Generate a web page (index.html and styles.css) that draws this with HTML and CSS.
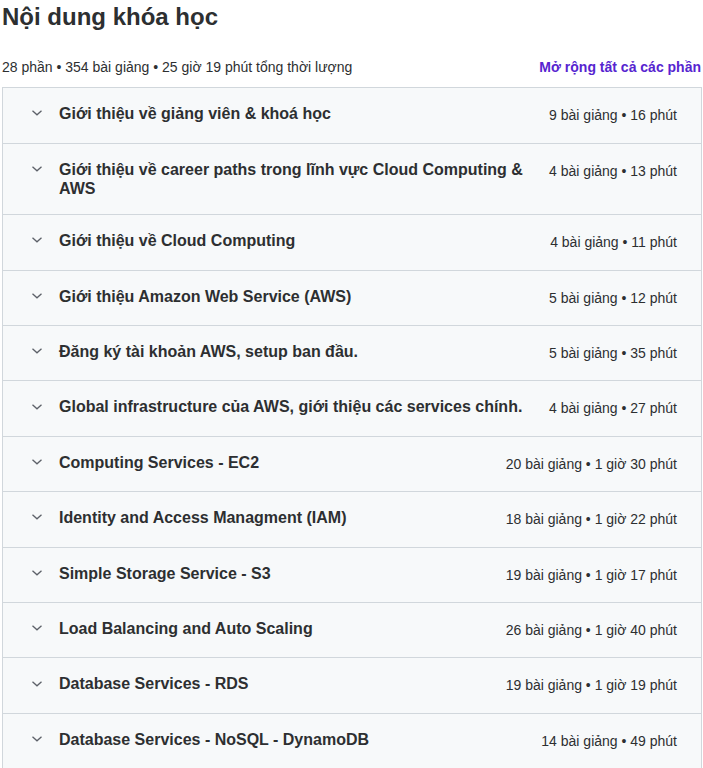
FILE: index.html
```html
<!DOCTYPE html>
<html lang="vi">
<head>
<meta charset="utf-8">
<title>Nội dung khóa học</title>
<link rel="stylesheet" href="styles.css">
</head>
<body>
<div class="page">
  <h2 class="heading">Nội dung khóa học</h2>
  <div class="summary">
    <span class="summary-text">28 phần • 354 bài giảng • 25 giờ 19 phút tổng thời lượng</span>
    <button class="expand-all">Mở rộng tất cả các phần</button>
  </div>
  <div class="curriculum">
    <div class="section"><span class="chev"><svg width="10" height="6" viewBox="0 0 10 6"><polyline points="0.5,0.8 5,4.8 9.5,0.8" fill="none" stroke="#5d6169" stroke-width="1.3"/></svg></span><span class="title">Giới thiệu về giảng viên &amp; khoá học</span><span class="meta">9 bài giảng • 16 phút</span></div>
    <div class="section"><span class="chev"><svg width="10" height="6" viewBox="0 0 10 6"><polyline points="0.5,0.8 5,4.8 9.5,0.8" fill="none" stroke="#5d6169" stroke-width="1.3"/></svg></span><span class="title">Giới thiệu về career paths trong lĩnh vực Cloud Computing &amp; AWS</span><span class="meta">4 bài giảng • 13 phút</span></div>
    <div class="section"><span class="chev"><svg width="10" height="6" viewBox="0 0 10 6"><polyline points="0.5,0.8 5,4.8 9.5,0.8" fill="none" stroke="#5d6169" stroke-width="1.3"/></svg></span><span class="title">Giới thiệu về Cloud Computing</span><span class="meta">4 bài giảng • 11 phút</span></div>
    <div class="section"><span class="chev"><svg width="10" height="6" viewBox="0 0 10 6"><polyline points="0.5,0.8 5,4.8 9.5,0.8" fill="none" stroke="#5d6169" stroke-width="1.3"/></svg></span><span class="title">Giới thiệu Amazon Web Service (AWS)</span><span class="meta">5 bài giảng • 12 phút</span></div>
    <div class="section"><span class="chev"><svg width="10" height="6" viewBox="0 0 10 6"><polyline points="0.5,0.8 5,4.8 9.5,0.8" fill="none" stroke="#5d6169" stroke-width="1.3"/></svg></span><span class="title">Đăng ký tài khoản AWS, setup ban đầu.</span><span class="meta">5 bài giảng • 35 phút</span></div>
    <div class="section"><span class="chev"><svg width="10" height="6" viewBox="0 0 10 6"><polyline points="0.5,0.8 5,4.8 9.5,0.8" fill="none" stroke="#5d6169" stroke-width="1.3"/></svg></span><span class="title">Global infrastructure của AWS, giới thiệu các services chính.</span><span class="meta">4 bài giảng • 27 phút</span></div>
    <div class="section"><span class="chev"><svg width="10" height="6" viewBox="0 0 10 6"><polyline points="0.5,0.8 5,4.8 9.5,0.8" fill="none" stroke="#5d6169" stroke-width="1.3"/></svg></span><span class="title">Computing Services - EC2</span><span class="meta">20 bài giảng • 1 giờ 30 phút</span></div>
    <div class="section"><span class="chev"><svg width="10" height="6" viewBox="0 0 10 6"><polyline points="0.5,0.8 5,4.8 9.5,0.8" fill="none" stroke="#5d6169" stroke-width="1.3"/></svg></span><span class="title">Identity and Access Managment (IAM)</span><span class="meta">18 bài giảng • 1 giờ 22 phút</span></div>
    <div class="section"><span class="chev"><svg width="10" height="6" viewBox="0 0 10 6"><polyline points="0.5,0.8 5,4.8 9.5,0.8" fill="none" stroke="#5d6169" stroke-width="1.3"/></svg></span><span class="title">Simple Storage Service - S3</span><span class="meta">19 bài giảng • 1 giờ 17 phút</span></div>
    <div class="section"><span class="chev"><svg width="10" height="6" viewBox="0 0 10 6"><polyline points="0.5,0.8 5,4.8 9.5,0.8" fill="none" stroke="#5d6169" stroke-width="1.3"/></svg></span><span class="title">Load Balancing and Auto Scaling</span><span class="meta">26 bài giảng • 1 giờ 40 phút</span></div>
    <div class="section"><span class="chev"><svg width="10" height="6" viewBox="0 0 10 6"><polyline points="0.5,0.8 5,4.8 9.5,0.8" fill="none" stroke="#5d6169" stroke-width="1.3"/></svg></span><span class="title">Database Services - RDS</span><span class="meta">19 bài giảng • 1 giờ 19 phút</span></div>
    <div class="section"><span class="chev"><svg width="10" height="6" viewBox="0 0 10 6"><polyline points="0.5,0.8 5,4.8 9.5,0.8" fill="none" stroke="#5d6169" stroke-width="1.3"/></svg></span><span class="title">Database Services - NoSQL - DynamoDB</span><span class="meta">14 bài giảng • 49 phút</span></div>
  </div>
</div>
</body>
</html>
```

FILE: styles.css
```css
html, body {
  margin: 0;
  padding: 0;
  background: #ffffff;
}
body {
  font-family: "Liberation Sans", Arial, sans-serif;
  color: #2d2f31;
}
.page {
  width: 700px;
  margin-left: 2px;
}
.heading {
  margin: 3px 0 0 0;
  font-size: 24px;
  line-height: 28.8px;
  font-weight: 700;
  color: #2d2f31;
}
.summary {
  display: flex;
  justify-content: space-between;
  align-items: center;
  margin-top: 26px;
  margin-bottom: 10px;
  font-size: 14px;
  line-height: 19.6px;
}
.summary-text {
  color: #2d2f31;
}
.expand-all {
  border: none;
  background: none;
  padding: 0;
  margin-right: 1px;
  font-family: inherit;
  font-size: 14px;
  line-height: 19.6px;
  font-weight: 700;
  color: #5624d0;
  cursor: pointer;
}
.curriculum {
  border: 1px solid #d1d7dc;
  border-bottom: none;
}
.section {
  display: flex;
  align-items: flex-start;
  padding: 16px 24px 16px 29px;
  background: #f7f9fa;
  border-bottom: 1px solid #d1d7dc;
}
.chev {
  flex: 0 0 14px;
  height: 19.2px;
  display: flex;
  align-items: center;
  justify-content: flex-start;
  margin-right: 13px;
}
.chev svg {
  display: block;
  margin-top: -1px;
}
.title {
  flex: 1 1 auto;
  font-size: 16px;
  line-height: 19.2px;
  font-weight: 700;
  color: #2d2f31;
}
.meta {
  flex: 0 0 auto;
  margin-left: 20px;
  font-size: 14px;
  line-height: 22.4px;
  white-space: nowrap;
  color: #2d2f31;
}
```
